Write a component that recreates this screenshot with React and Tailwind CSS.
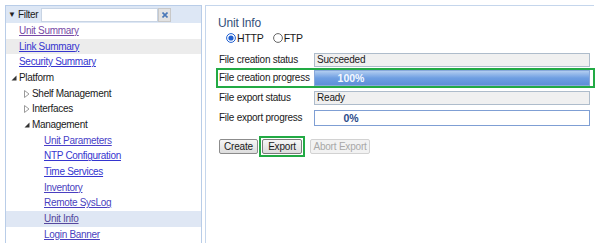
import React from "react";

const font = { fontFamily: '"Liberation Sans", Arial, sans-serif' };

function Expanded() {
  return (
    <svg width="6" height="6" viewBox="0 0 6 6" className="shrink-0">
      <polygon points="0.5,5.5 5.5,5.5 5.5,0.5" fill="#333" />
    </svg>
  );
}
function Collapsed() {
  return (
    <svg width="6" height="8" viewBox="0 0 6 8" className="shrink-0">
      <polygon points="0.5,0.5 5,4 0.5,7.5" fill="none" stroke="#9a9a9a" strokeWidth="1" />
    </svg>
  );
}

function LinkRow({ text, indent, color, bg }) {
  return (
    <div className={`h-[15.7px] flex items-center ${bg || ""}`}>
      <span
        className={`${indent} underline text-[10px] tracking-[-0.3px] leading-none`}
        style={{ color }}
      >
        {text}
      </span>
    </div>
  );
}

function TreeRow({ text, indent, icon }) {
  return (
    <div className={`h-[15.7px] flex items-center ${indent}`}>
      <span className="w-[8px] flex items-center">{icon}</span>
      <span className="text-[10px] tracking-[-0.3px] leading-none text-[#1a1a1a]">{text}</span>
    </div>
  );
}

export default function App() {
  const blue = "#3535cf";
  return (
    <div className="w-[602px] h-[243px] bg-white overflow-hidden flex pt-[5px] pl-[5px]" style={font}>
      {/* Left panel */}
      <div className="w-[197px] h-[260px] border-l border-r border-t border-[#b9cde8] flex flex-col">
        <div className="h-[17px] bg-[#dde7f5] flex items-center pl-[2px]">
          <span className="text-[8px] text-[#222] mr-[2px] leading-none">▼</span>
          <span className="text-[10px] tracking-[-0.3px] text-[#1a1a1a] leading-none">Filter</span>
          <div className="ml-[3px] w-[117px] h-[14px] bg-white border border-[#c8d4e4]" />
          <div className="w-[13px] h-[14px] bg-[#e2e2e2] border border-[#c8c8c8] flex items-center justify-center">
            <svg width="6" height="6" viewBox="0 0 6 6">
              <path d="M0.5 0.5 L5.5 5.5 M5.5 0.5 L0.5 5.5" stroke="#4a78b8" strokeWidth="1.6" />
            </svg>
          </div>
        </div>
        <LinkRow text="Unit Summary" indent="pl-[13px]" color="#774aa6" />
        <LinkRow text="Link Summary" indent="pl-[13px]" color={blue} bg="bg-[#ececec]" />
        <LinkRow text="Security Summary" indent="pl-[13px]" color={blue} />
        <TreeRow text="Platform" indent="pl-[5px]" icon={<Expanded />} />
        <TreeRow text="Shelf Management" indent="pl-[18px]" icon={<Collapsed />} />
        <TreeRow text="Interfaces" indent="pl-[18px]" icon={<Collapsed />} />
        <TreeRow text="Management" indent="pl-[18px]" icon={<Expanded />} />
        <LinkRow text="Unit Parameters" indent="pl-[38px]" color="#4a3fc8" />
        <LinkRow text="NTP Configuration" indent="pl-[38px]" color={blue} />
        <LinkRow text="Time Services" indent="pl-[38px]" color={blue} />
        <LinkRow text="Inventory" indent="pl-[38px]" color="#4a3fc0" />
        <LinkRow text="Remote SysLog" indent="pl-[38px]" color="#4a3fc0" />
        <LinkRow text="Unit Info" indent="pl-[38px]" color="#55479e" bg="bg-[#dfe7f4]" />
        <LinkRow text="Login Banner" indent="pl-[38px]" color="#4a3fc0" />
      </div>

      {/* Right panel */}
      <div className="ml-[3px] w-[389px] h-[260px] border-l border-t border-[#c5d6ec] pl-[12px] pt-[10px] flex flex-col">
        <div className="h-[14px] flex items-center text-[12px] tracking-[-0.2px] text-[#34507a] leading-none">Unit Info</div>
        <div className="mt-[1px] h-[14px] flex items-center pl-[8px] text-[10.5px] tracking-[-0.2px] text-[#1a1a1a] leading-none">
          <svg width="10" height="10" viewBox="0 0 10 10" className="mr-[1px]">
            <circle cx="5" cy="5" r="4.4" fill="white" stroke="#1f5fd0" strokeWidth="1" />
            <circle cx="5" cy="5" r="2.6" fill="#1f5fd0" />
          </svg>
          <span>HTTP</span>
          <svg width="10" height="10" viewBox="0 0 10 10" className="ml-[9px] mr-[1px]">
            <circle cx="5" cy="5" r="4.4" fill="white" stroke="#666" strokeWidth="1" />
          </svg>
          <span>FTP</span>
        </div>

        {/* Row 1 */}
        <div className="mt-[8px] flex items-center h-[14px] pl-[1px]">
          <span className="w-[95px] text-[10px] tracking-[-0.25px] text-[#1a1a1a] leading-none">File creation status</span>
          <div className="w-[276px] h-[14px] bg-[#f0f0f0] border border-[#aebccb] flex items-center pl-[2px] text-[10px] tracking-[-0.2px] text-[#1a1a1a] leading-none">
            Succeeded
          </div>
        </div>

        {/* Row 2 - highlighted */}
        <div className="mt-[1px] -ml-[2px] w-[379px] h-[20px] border-2 border-[#22aa44] flex items-center pl-[1px]">
          <span className="w-[95px] text-[10px] tracking-[-0.25px] text-[#1a1a1a] leading-none">File creation progress</span>
          <div className="w-[276px] h-[16px] border border-[#88a8da] bg-gradient-to-b from-[#b2cdf0] via-[#6f9fe2] to-[#5d8fd8] flex items-center">
            <span className="w-[72px] text-center text-[10.5px] font-bold text-[#f4f8ff] leading-none">100%</span>
          </div>
        </div>

        {/* Row 3 */}
        <div className="mt-[3px] flex items-center h-[14px] pl-[1px]">
          <span className="w-[95px] text-[10px] tracking-[-0.25px] text-[#1a1a1a] leading-none">File export status</span>
          <div className="w-[276px] h-[14px] bg-[#f0f0f0] border border-[#aebccb] flex items-center pl-[2px] text-[10px] tracking-[-0.2px] text-[#1a1a1a] leading-none">
            Ready
          </div>
        </div>

        {/* Row 4 */}
        <div className="mt-[5px] flex items-center h-[16px] pl-[1px]">
          <span className="w-[95px] text-[10px] tracking-[-0.25px] text-[#1a1a1a] leading-none">File export progress</span>
          <div className="w-[276px] h-[16px] bg-white border border-[#7f9fd4] flex items-center">
            <span className="w-[72px] text-center text-[10.5px] font-bold text-[#2a4a8a] leading-none">0%</span>
          </div>
        </div>

        {/* Buttons */}
        <div className="mt-[10px] flex items-center pl-[1px]">
          <button className="w-[39px] h-[15px] border border-[#8c8c8c] rounded-[2px] bg-gradient-to-b from-[#f6f6f6] to-[#dddddd] text-[10px] tracking-[-0.2px] text-[#1a1a1a] leading-none flex items-center justify-center">
            Create
          </button>
          <div className="ml-[1px] border-2 border-[#22aa44] p-[1px]">
            <button className="w-[40px] h-[15px] border border-[#7a7a7a] rounded-[2px] bg-gradient-to-b from-[#f6f6f6] to-[#dddddd] text-[10px] tracking-[-0.2px] text-[#1a1a1a] leading-none flex items-center justify-center">
              Export
            </button>
          </div>
          <button className="ml-[5px] w-[60px] h-[15px] border border-[#d2d2d2] rounded-[2px] bg-[#f2f2f2] text-[10px] tracking-[-0.2px] text-[#a8a8a8] leading-none flex items-center justify-center">
            Abort Export
          </button>
        </div>
      </div>
    </div>
  );
}
